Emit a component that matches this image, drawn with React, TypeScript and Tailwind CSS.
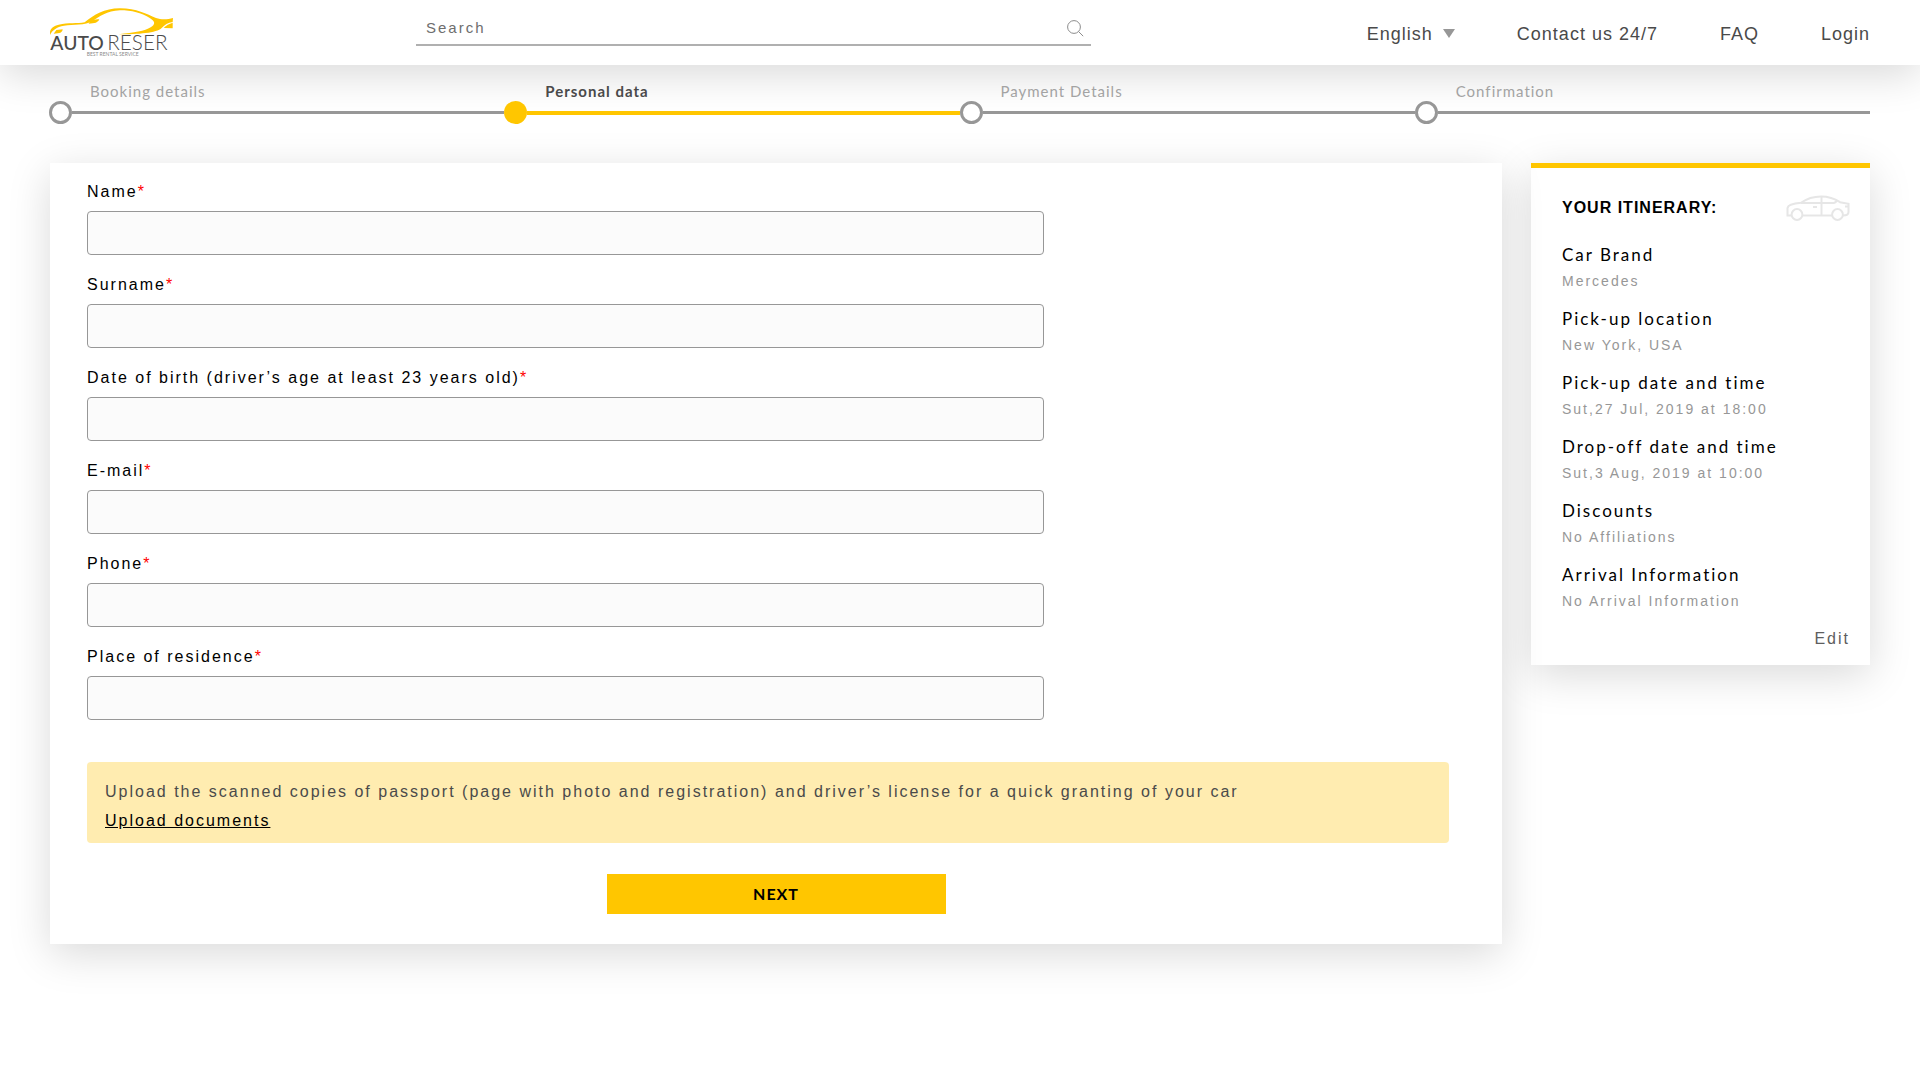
import type { ReactNode } from 'react';

const NAV_LINKS = ['Contact us 24/7', 'FAQ', 'Login'];

type StepState = 'done' | 'active' | 'todo';

const STEPS: { label: string; state: StepState }[] = [
  { label: 'Booking details', state: 'done' },
  { label: 'Personal data', state: 'active' },
  { label: 'Payment Details', state: 'todo' },
  { label: 'Confirmation', state: 'todo' },
];

const FIELDS = [
  { id: 'name', label: 'Name', type: 'text' },
  { id: 'surname', label: 'Surname', type: 'text' },
  { id: 'birth', label: 'Date of birth (driver’s age at least 23 years old)', type: 'text' },
  { id: 'email', label: 'E-mail', type: 'email' },
  { id: 'phone', label: 'Phone', type: 'tel' },
  { id: 'residence', label: 'Place of residence', type: 'text' },
];

const ITINERARY = [
  { title: 'Car Brand', value: 'Mercedes' },
  { title: 'Pick-up location', value: 'New York, USA' },
  { title: 'Pick-up date and time', value: 'Sut,27 Jul, 2019 at 18:00' },
  { title: 'Drop-off date and time', value: 'Sut,3 Aug, 2019 at 10:00' },
  { title: 'Discounts', value: 'No Affiliations' },
  { title: 'Arrival Information', value: 'No Arrival Information' },
];

function Logo() {
  return (
    <svg viewBox="60 23 375 150" className="h-[50px] w-[125px]" role="img" aria-label="Auto Reser">
      <g fill="#ffc600">
        <path d="M60 104 C57 88 68 77 86 73 C115 67 142 70 164 66 C192 44 222 24 270 24 C320 24 350 42 378 53 C395 59 414 57 429 53 L428 65 C414 67 403 74 395 83 C380 98 325 102 266 102 C312 97 345 92 362 81 C377 71 376 63 358 52 C335 38 305 30 270 30 C230 31 208 50 188 62 C165 76 130 72 102 76 C80 80 66 90 60 104Z" />
        <path d="M71 100 L79 89 L98 87 C97 97 90 100 71 100Z" />
        <path d="M176 70 C183 59 192 57 208 57 C204 67 194 70 176 70Z" />
        <path d="M401 83 C409 75 417 70 428 67 L428 84Z" />
      </g>
      <g fill="#4a4a4a" className="font-[Lato,sans-serif]">
        <text x="61" y="150" fontSize="58" fontWeight="500">AUTO</text>
        <text x="232" y="150" fontSize="62" fontWeight="300">RESER</text>
        <text x="170" y="167" fontSize="15" fill="#8a8a8a">BEST RENTAL SERVICE</text>
      </g>
    </svg>
  );
}

function SearchIcon() {
  return (
    <svg viewBox="0 0 17 17" className="h-[17px] w-[17px]" fill="none" stroke="#8c8c8c" aria-hidden="true">
      <circle cx="7" cy="7" r="6.4" />
      <path d="M11.6 11.6 L16.2 16.2" />
    </svg>
  );
}

function CarIcon() {
  return (
    <svg viewBox="0 0 64 26" className="h-[26px] w-16" fill="none" stroke="#e6e6e6" strokeWidth="2" aria-hidden="true">
      <path d="M5.5 20.5 H1.5 V13 C2 10 6 8.6 15 7.8 C21 3.5 27 1.5 35 1.5 C45 1.5 50 4.5 54 7.2 L62.5 8.8 V17 C62.5 19.5 60 20.5 57 20.5" />
      <path d="M16.5 20.5 H46" />
      <path d="M15 8 H47.5 C49.5 8 50.5 6.5 51 5.2" />
      <path d="M35.5 1.5 V20.5" />
      <path d="M27 12 H31 M59 11.5 H62.5" />
      <circle cx="11" cy="19.5" r="5.4" />
      <circle cx="51.5" cy="19.5" r="5.4" />
    </svg>
  );
}

function Header() {
  return (
    <header className="flex h-[65px] items-center bg-white px-[50px] shadow-[0_10px_40px_rgba(0,0,0,0.15)]">
      <a href="#" className="shrink-0">
        <Logo />
      </a>
      <form className="mt-[13px] ml-[241px] flex h-[33px] max-w-[675px] flex-1 items-center self-start border-b-2 border-[#b0b0b0] pr-[7px] pl-[10px]">
        <input
          type="search"
          aria-label="Search"
          placeholder="Search"
          className="min-w-0 flex-1 bg-transparent text-[15px] tracking-[2px] text-[#4a4a4a] outline-none placeholder:text-[#6e6e6e]"
        />
        <button type="submit" aria-label="Search">
          <SearchIcon />
        </button>
      </form>
      <nav className="ml-auto flex items-center gap-[62px] pt-[2px] text-lg tracking-[1px] text-[#4a4a4a]">
        <div className="flex items-center gap-[10px]">
          <select aria-label="Language" className="field-sizing-content appearance-none bg-transparent tracking-[1px] outline-none">
            <option>English</option>
          </select>
          <svg viewBox="0 0 12 9" className="h-[9px] w-3" fill="#979797" aria-hidden="true">
            <path d="M0 0 H12 L6 9Z" />
          </svg>
        </div>
        {NAV_LINKS.map((link) => (
          <a key={link} href="#" className="whitespace-nowrap">
            {link}
          </a>
        ))}
      </nav>
    </header>
  );
}

const STEP_STYLE: Record<StepState, { dot: string; line: string; text: string }> = {
  done: { dot: 'border-[3px] border-[#979797] bg-white', line: 'h-[3px] bg-[#979797]', text: 'text-[#a3a3a3]' },
  active: { dot: 'bg-[#ffc600]', line: 'h-1 bg-[#ffc600]', text: 'font-bold text-[#4a4a4a]' },
  todo: { dot: 'border-[3px] border-[#979797] bg-white', line: 'h-[3px] bg-[#979797]', text: 'text-[#a3a3a3]' },
};

function Steps() {
  return (
    <ol className="flex pt-[17px] pr-[50px] pl-[49px] font-[Lato,sans-serif]">
      {STEPS.map((step) => {
        const style = STEP_STYLE[step.state];
        return (
          <li key={step.label} className="flex-1" aria-current={step.state === 'active' ? 'step' : undefined}>
            <div className={`pl-[41px] text-[15px] leading-[19px] tracking-[1px] ${style.text}`}>{step.label}</div>
            <div className="flex items-center">
              <span className={`h-[23px] w-[23px] rounded-full ${style.dot}`} />
              <span className={`flex-1 ${style.line}`} />
            </div>
          </li>
        );
      })}
    </ol>
  );
}

function Card({ className, children }: { className: string; children: ReactNode }) {
  return <div className={`bg-white shadow-[0_10px_40px_rgba(0,0,0,0.15)] ${className}`}>{children}</div>;
}

function PersonalForm() {
  return (
    <form className="flex flex-col px-[37px] pt-[17px] pb-[30px]">
      <div className="flex flex-col gap-[18px]">
        {FIELDS.map((field) => (
          <div key={field.id} className="flex flex-col gap-[7px]">
            <label htmlFor={field.id} className="text-base tracking-[2px] text-black">
              {field.label}
              <span className="text-[#ff0000]">*</span>
            </label>
            <input
              id={field.id}
              type={field.type}
              className="h-11 w-full max-w-[957px] rounded border border-[#979797] bg-[#fbfbfb] px-3 outline-none"
            />
          </div>
        ))}
      </div>
      <div className="mt-[42px] mr-4 rounded bg-[#ffecb0] px-[18px] pt-[15px] pb-2 text-base leading-[29px] tracking-[2px]">
        <p className="text-[#4a4a4a]">
          Upload the scanned copies of passport (page with photo and registration) and driver’s license for a quick granting of your car
        </p>
        <a href="#" className="text-black underline">
          Upload documents
        </a>
      </div>
      <button
        type="submit"
        className="mt-[31px] h-10 w-[339px] self-center bg-[#ffc600] font-[Lato,sans-serif] text-base font-bold tracking-[1px] text-black"
      >
        NEXT
      </button>
    </form>
  );
}

function Itinerary() {
  return (
    <div className="flex flex-col pt-[27px] pr-5 pb-[14px] pl-[31px]">
      <div className="flex items-center justify-between">
        <h2 className="text-base font-bold tracking-[1px] text-black">YOUR ITINERARY:</h2>
        <CarIcon />
      </div>
      <dl className="mt-[21px] flex flex-col gap-3">
        {ITINERARY.map((item) => (
          <div key={item.title}>
            <dt className="font-[Lato,sans-serif] text-[17px] leading-[26px] tracking-[2px] text-black">{item.title}</dt>
            <dd className="text-sm leading-[26px] tracking-[2px] text-[#979797]">{item.value}</dd>
          </div>
        ))}
      </dl>
      <a href="#" className="mt-[13px] self-end text-base tracking-[2px] text-[#5e5e5e]">
        Edit
      </a>
    </div>
  );
}

export default function App() {
  return (
    <div className="min-h-screen bg-white font-['Liberation_Sans',Arial,sans-serif]">
      <Header />
      <Steps />
      <main className="flex items-start gap-[29px] px-[50px] pt-[39px] pb-12">
        <Card className="relative min-w-0 flex-1">
          <PersonalForm />
        </Card>
        <aside className="w-[339px] shrink-0">
          <Card className="border-t-[5px] border-[#ffc600]">
            <Itinerary />
          </Card>
        </aside>
      </main>
    </div>
  );
}
